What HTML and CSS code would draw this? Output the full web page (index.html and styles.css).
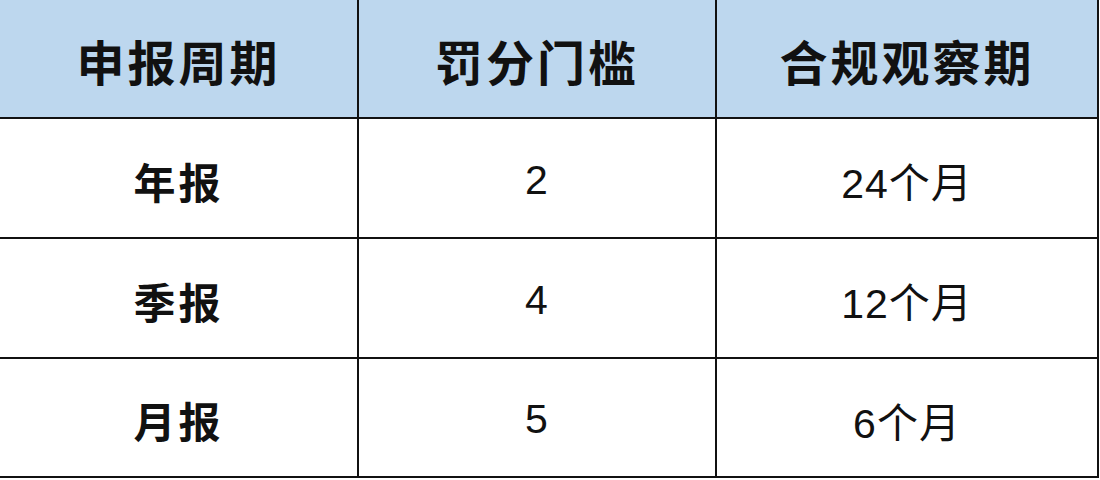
FILE: index.html
```html
<!DOCTYPE html>
<html lang="zh">
<head>
<meta charset="utf-8">
<link rel="stylesheet" href="styles.css">
</head>
<body>
<div class="table">
  <div class="cell head">申报周期</div>
  <div class="cell head">罚分门槛</div>
  <div class="cell head">合规观察期</div>
  <div class="cell label">年报</div>
  <div class="cell num">2</div>
  <div class="cell num">24个月</div>
  <div class="cell label">季报</div>
  <div class="cell num">4</div>
  <div class="cell num">12个月</div>
  <div class="cell label">月报</div>
  <div class="cell num">5</div>
  <div class="cell num">6个月</div>
</div>
</body>
</html>
```
FILE: styles.css
```css
html, body {
  margin: 0;
  padding: 0;
  background: #ffffff;
}
.table {
  width: 1097px;
  display: grid;
  grid-template-columns: 357px 356px 380px;
  grid-template-rows: 117px 118px 118px 117px;
  gap: 2px;
  background: #111111;
  border-right: 2px solid #111111;
  border-bottom: 2px solid #111111;
  font-family: "Noto Sans CJK SC", "Noto Sans", sans-serif;
  color: #111111;
}
.cell {
  display: flex;
  align-items: center;
  justify-content: center;
  background: #ffffff;
}
.head {
  background: #bdd7ee;
  font-size: 48px;
  font-weight: 700;
  letter-spacing: 3px;
  padding-top: 2px;
}
.label {
  font-size: 42px;
  font-weight: 700;
  letter-spacing: 3px;
  padding-top: 4px;
}
.num {
  font-family: "Liberation Sans", "Noto Sans CJK SC", sans-serif;
  font-size: 41px;
  font-weight: 400;
  letter-spacing: 1px;
  padding-top: 4px;
}
```
